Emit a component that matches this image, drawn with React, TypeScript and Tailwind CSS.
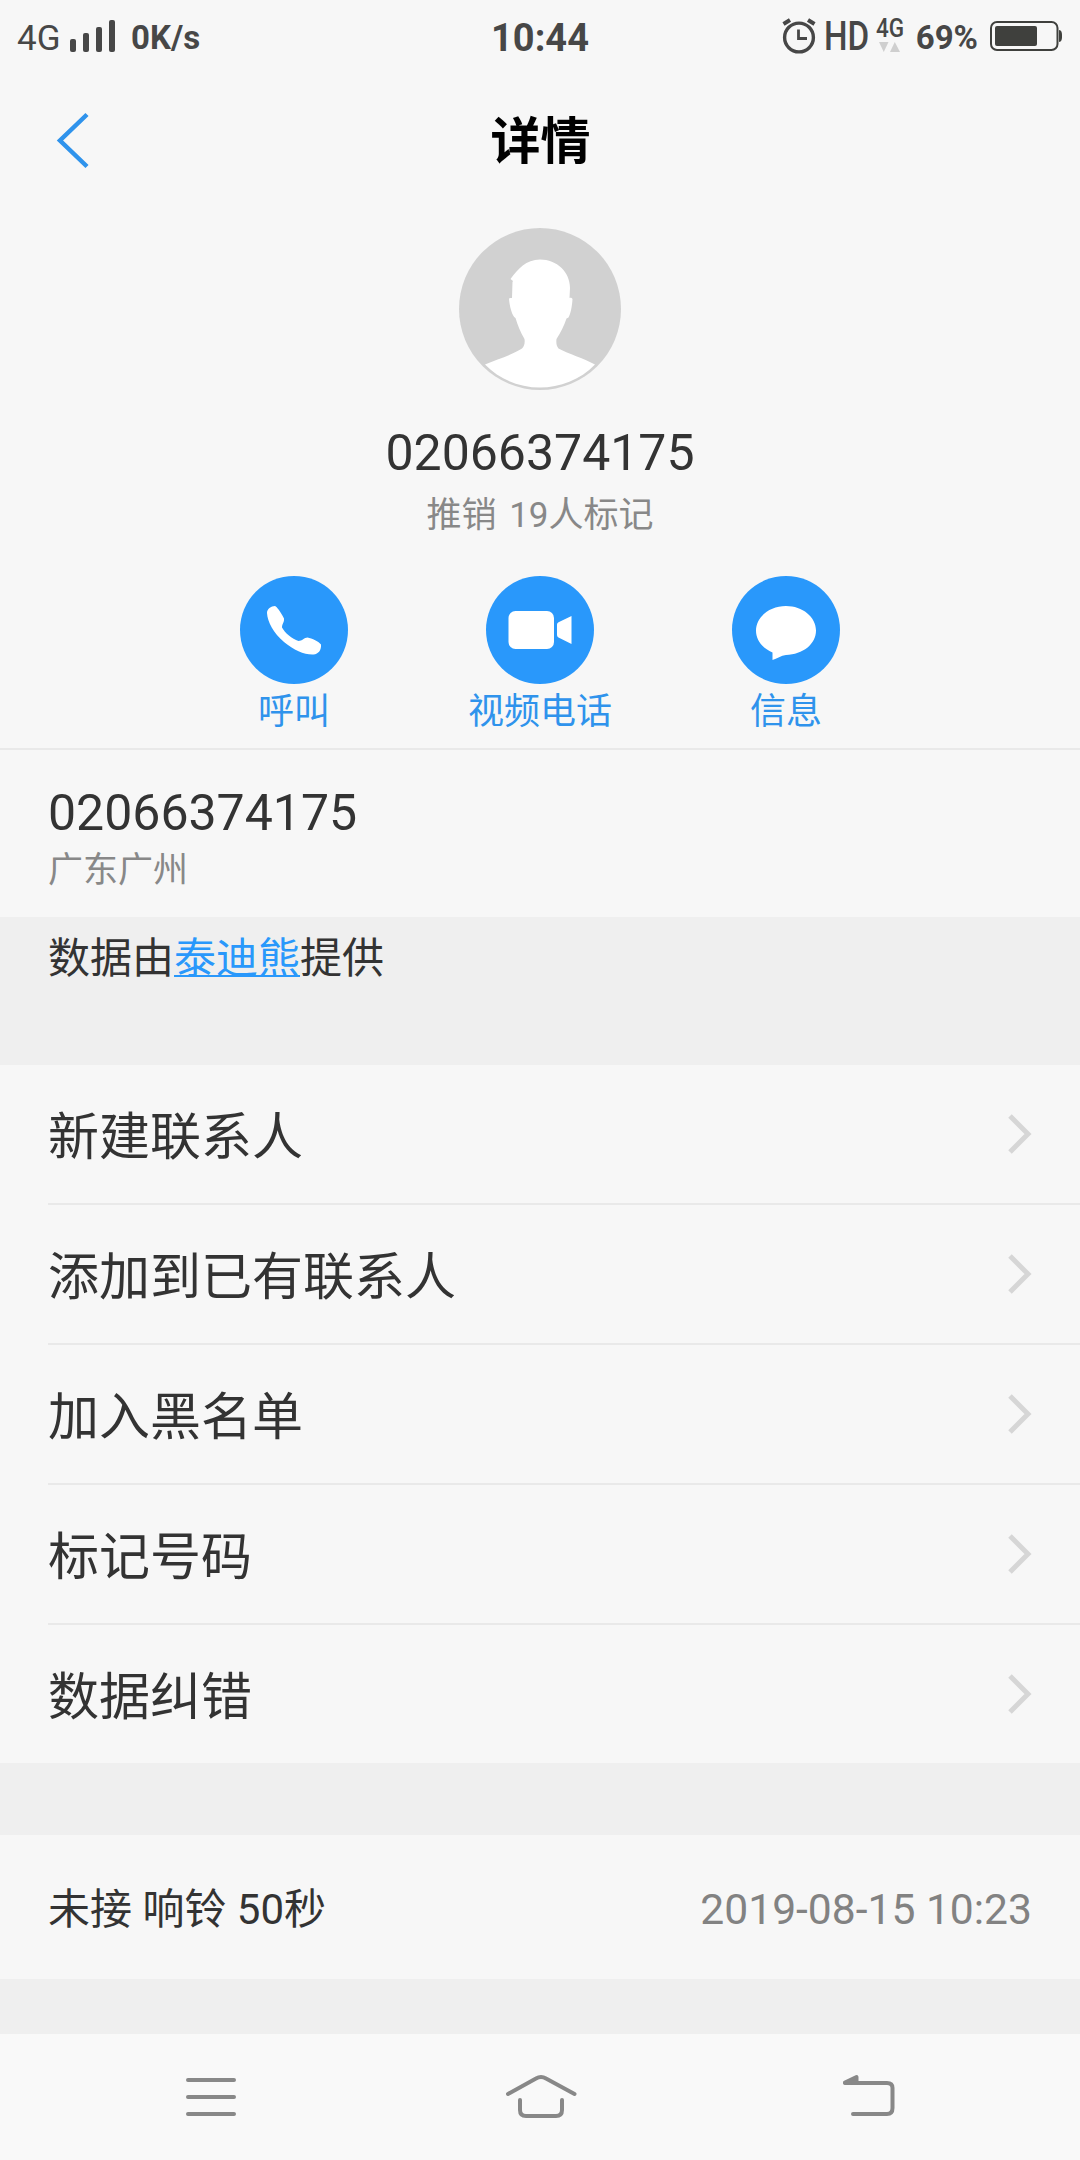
import React from 'react';

const PHONE = '02066374175';

const menuItems = ['新建联系人', '添加到已有联系人', '加入黑名单', '标记号码', '数据纠错'];

function SignalIcon() {
  return (
    <svg className="w-[46px] h-[34px] ml-[9px]" viewBox="0 0 46 34" fill="#474747">
      <rect x="0" y="20" width="6" height="13" rx="2" />
      <rect x="13" y="14" width="6" height="19" rx="2" />
      <rect x="26" y="8" width="6" height="25" rx="2" />
      <rect x="39" y="1" width="6" height="32" rx="2" />
    </svg>
  );
}

function AlarmIcon() {
  return (
    <svg className="w-[34px] h-[38px]" viewBox="0 0 34 38" fill="none" stroke="#474747">
      <circle cx="17" cy="20.5" r="14.4" strokeWidth="3.4" />
      <path d="M16.5 12.5V21.5H25" strokeWidth="2.8" />
      <path d="M1.5 7L8 3M26 3L32.5 7" strokeWidth="4" />
    </svg>
  );
}

function BatteryIcon() {
  return (
    <svg className="w-[73px] h-[32px]" viewBox="0 0 73 32">
      <rect x="1" y="2" width="66.5" height="28" rx="6" fill="none" stroke="#3f403d" strokeWidth="2" />
      <rect x="5" y="6" width="42" height="20" rx="2" fill="#3f403d" />
      <path d="M69 10C71.500 10.500 72 12 72 16C72 20 71.500 21.500 69 22Z" fill="#3f403d" />
    </svg>
  );
}

function StatusBar() {
  return (
    <div className="h-[76px] flex text-[#474747] leading-none">
      <div className="flex-1 flex items-start pl-[17px]">
        <span className="w-[44px] mt-[21px] text-[35px] leading-[36px]">4G</span>
        <div className="mt-[19px]"><SignalIcon /></div>
        <span className="mt-[20px] ml-[15px] text-[33px] leading-[36px] font-bold">0K/s</span>
      </div>
      <span className="mt-[18px] text-[38px] leading-[40px] font-bold">10:44</span>
      <div className="flex-1 flex items-start justify-end pr-[17px]">
        <div className="mt-[17px]"><AlarmIcon /></div>
        <span className="w-[46px] mt-[16px] ml-[8px] text-[41px] leading-[41px]">
          <span className="inline-block origin-left scale-x-[0.81] font-medium">HD</span>
        </span>
        <div className="w-[30px] mt-[18px] ml-[6px]">
          <span className="block w-[34px] origin-left scale-x-[0.9] text-[25px] leading-[22px] font-medium">4G</span>
          <svg className="w-[24px] h-[11px] mt-[2px] ml-[3px]" viewBox="0 0 24 11" fill="#cfcfcf">
            <path d="M0 0H9.500L4.750 10Z" />
            <path d="M11 10L15.800 0L21 10Z" />
          </svg>
        </div>
        <span className="mt-[20px] ml-[10px] text-[33px] leading-[36px] font-bold">69%</span>
        <div className="mt-[20px] ml-[12px]"><BatteryIcon /></div>
      </div>
    </div>
  );
}

function Avatar() {
  return (
    <svg className="w-[162px] h-[162px] mx-auto" viewBox="0 0 162 162">
      <circle cx="81" cy="81" r="81" fill="#d1d1d1" />
      <path
        d="M26 136.500C39 131 54 126.500 63 120.500C65.500 118 66 115 65.500 111C61.500 104 59 98 56.500 90C53 88 50.500 78 50 70.500C51 69.500 52 70 53 70L53.500 54L54 53L51.500 51C59 41 67 31.500 81 31.500C98 31.500 111 44 111 60L110.500 70C111.500 69.500 113 70 113.500 71C113 79 111.500 86 109.500 89.500L107.500 90.500C105 98 101.500 105 97.500 111C97 115 97.500 118 99.500 120.500C110 126 124 130 136 136.500C121 152 101 159.500 81 159.500C61 159.500 41 152 26 136.500Z"
        fill="#fff"
      />
    </svg>
  );
}

function CallIcon() {
  return (
    <svg className="w-[108px] h-[108px]" viewBox="0 0 108 108" fill="#fff">
      <path d="M27 37C27 33 31 30 35 30C37 31 40 35 44 42.500C44.500 46 42 48 42 51.500C45 57 52 63 58.500 65C62 65 64.500 61.500 67.500 61.500C72 62.500 79 65.500 81 68.500C81.500 74 78.500 78 73.500 78.500C65 79 54 74.500 44 66C33.500 57 27.500 46 27 37Z" />
    </svg>
  );
}

function VideoIcon() {
  return (
    <svg className="w-[108px] h-[108px]" viewBox="0 0 108 108" fill="#fff">
      <rect x="22.500" y="35" width="45.500" height="38" rx="7" />
      <path d="M71 48.500Q71 47 72.500 46.300L85.500 40V68L72.500 61.500Q71 60.500 71 59Z" />
    </svg>
  );
}

function MessageIcon() {
  return (
    <svg className="w-[108px] h-[108px]" viewBox="0 0 108 108" fill="#fff">
      <path d="M54 30C70.500 30 84 41 84 54.500C84 68 71 78.500 54 79C49 79.500 45 83 40.500 84V76.500C30.500 72.500 24 64 24 54.500C24 41 37.500 30 54 30Z" />
    </svg>
  );
}

const actions = [
  { label: '呼叫', Icon: CallIcon },
  { label: '视频电话', Icon: VideoIcon },
  { label: '信息', Icon: MessageIcon },
];

function Chevron() {
  return (
    <svg className="w-[26px] h-[42px]" viewBox="0 0 26 42" fill="none" stroke="#d6d6d6" strokeWidth="5">
      <path d="M2 3L20 21L2 39" />
    </svg>
  );
}

function NavBar() {
  return (
    <nav className="h-[126px] bg-[#f9f9f9]">
      <svg className="w-[1080px] h-[126px]" viewBox="0 2034 1080 126" fill="none" stroke="#888" strokeWidth="4" strokeLinecap="round" strokeLinejoin="round">
        <path d="M188 2080H234M188 2097H234M188 2114H234" />
        <path d="M508 2094L536 2078.500Q541 2075.500 546 2078.500L574.500 2094" />
        <path d="M520 2100V2110Q520 2116 526 2116H556Q562 2116 562 2110V2100" />
        <path d="M845 2083H887Q892.500 2083 892.500 2088V2108Q892.500 2114 887 2114H853" />
        <path d="M845 2082.500L856.500 2077V2083Z" fill="#888" />
      </svg>
    </nav>
  );
}

export default function App() {
  return (
    <div className="w-[1080px] h-[2160px] bg-[#f7f7f7] flex flex-col overflow-hidden text-[#333] font-['Roboto','Noto_Sans_CJK_SC',sans-serif]">
      <StatusBar />

      <header className="h-[128px] flex items-center px-[56px]">
        <svg className="w-[34px] h-[58px]" viewBox="0 0 34 58" fill="none" stroke="#2f93ec" strokeWidth="4.5">
          <path d="M31 3.500L4 29.500L31 55.500" />
        </svg>
        <h1 className="flex-1 pt-[3px] pl-px text-center text-[50px] leading-[60px] font-bold text-black">详情</h1>
        <div className="w-[34px]" />
      </header>

      <section className="h-[546px] pt-[24px] border-b-2 border-[#e9e9e9]">
        <Avatar />
        <p className="mt-[33px] text-center text-[50px] leading-[60px]">{PHONE}</p>
        <p className="mt-[12px] text-center text-[35px] leading-[42px] text-[#888] [word-spacing:4px]">推销 19人标记</p>
        <div className="flex justify-center mt-[39px]">
          {actions.map(({ label, Icon }) => (
            <button key={label} className="w-[246px] flex flex-col items-center">
              <span className="rounded-full bg-[#2998fb]"><Icon /></span>
              <span className="mt-[7px] text-[36px] leading-[42px] text-[#2f93ec]">{label}</span>
            </button>
          ))}
        </div>
      </section>

      <section className="h-[167px] pt-[33px] pl-[48px]">
        <p className="text-[50px] leading-[60px]">{PHONE}</p>
        <p className="mt-[7px] text-[35px] leading-[42px] text-[#888]">广东广州</p>
      </section>

      <div className="h-[148px] bg-[#efefef] pt-[17px] pl-[48px]">
        <p className="text-[42px] leading-[50px]">
          数据由<a className="text-[#2998fb] underline decoration-[2px] underline-offset-[2px] [text-decoration-skip-ink:none]">泰迪熊</a>提供
        </p>
      </div>

      <ul className="pl-[48px]">
        {menuItems.map((item) => (
          <li
            key={item}
            className="h-[140px] last:h-[138px] flex items-center justify-between pr-[46px] border-b-2 border-[#e9e9e9] last:border-b-0"
          >
            <span className="pt-[8px] text-[51px] leading-[60px]">{item}</span>
            <Chevron />
          </li>
        ))}
      </ul>

      <div className="h-[72px] bg-[#efefef]" />
      <section className="h-[144px] flex items-center justify-between px-[48px] text-[42px] leading-[50px]">
        <span className="pt-[6px]">未接 响铃 50秒</span>
        <span className="pt-[3px] text-[42.6px] text-[#828282]">2019-08-15 10:23</span>
      </section>
      <div className="h-[55px] bg-[#efefef]" />

      <NavBar />
    </div>
  );
}
